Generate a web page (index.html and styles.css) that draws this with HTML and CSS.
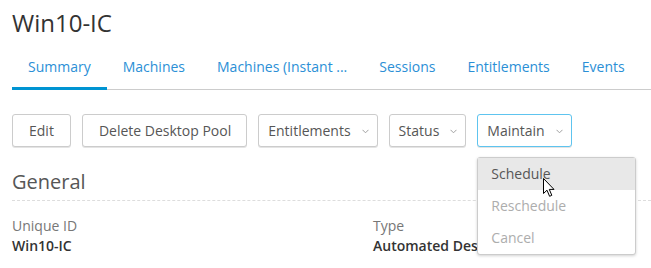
FILE: index.html
```html
<!DOCTYPE html>
<html>
<head>
<meta charset="utf-8">
<link rel="stylesheet" href="styles.css">
</head>
<body>
<div class="page">
  <h1 class="title">Win10-IC</h1>
  <nav class="tabs">
    <a class="tab active">Summary</a>
    <a class="tab">Machines</a>
    <a class="tab">Machines (Instant ...</a>
    <a class="tab">Sessions</a>
    <a class="tab">Entitlements</a>
    <a class="tab">Events</a>
  </nav>
  <div class="toolbar">
    <button class="btn">Edit</button>
    <button class="btn wide">Delete Desktop Pool</button>
    <button class="btn dd">Entitlements<svg class="chev" viewBox="0 0 7 5" width="7" height="5"><path d="M0.5 0.8 L3.5 3.8 L6.5 0.8" fill="none" stroke="#a0a0a0" stroke-width="1"/></svg></button>
    <button class="btn dd">Status<svg class="chev" viewBox="0 0 7 5" width="7" height="5"><path d="M0.5 0.8 L3.5 3.8 L6.5 0.8" fill="none" stroke="#a0a0a0" stroke-width="1"/></svg></button>
    <div class="dd-wrap">
      <button class="btn dd focus">Maintain<svg class="chev" viewBox="0 0 7 5" width="7" height="5"><path d="M0.5 0.8 L3.5 3.8 L6.5 0.8" fill="none" stroke="#a0a0a0" stroke-width="1"/></svg></button>
      <ul class="menu">
        <li class="item hover">Schedule</li>
        <li class="item disabled">Reschedule</li>
        <li class="item disabled">Cancel</li>
      </ul>
    </div>
  </div>
  <h2 class="section">General</h2>
  <div class="fields">
    <div class="field">
      <div class="label">Unique ID</div>
      <div class="value">Win10-IC</div>
    </div>
    <div class="field">
      <div class="label">Type</div>
      <div class="value">Automated Desktop Pool</div>
    </div>
  </div>
</div>
<svg class="cursor" width="13" height="20" viewBox="0 0 13 20"><path d="M0.5 0.5 L0.5 15.5 L4 12.2 L6.6 18.3 L8.8 17.3 L6.3 11.4 L11 11.4 Z" fill="#fff" stroke="#000" stroke-width="1" stroke-linejoin="miter"/></svg>
</body>
</html>
```

FILE: styles.css
```css
* { box-sizing: border-box; }
html, body { margin: 0; padding: 0; background: #fff; }
body {
  font-family: "Open Sans", "Noto Sans", sans-serif;
  color: #565656;
  width: 651px;
  height: 268px;
  overflow: hidden;
  position: relative;
}
.page { padding: 5px 0 0 12px; }
.title {
  margin: 0;
  font-size: 24px;
  line-height: 35px;
  font-weight: 400;
  color: #333;
}
.tabs {
  display: flex;
  border-bottom: 1px solid #ccc;
  margin-right: -12px;
}
.tab {
  display: block;
  padding: 17px 16px 10px;
  font-size: 14px;
  line-height: 20px;
  color: #2b8fd6;
  border-bottom: 3px solid transparent;
  margin-bottom: -1px;
  white-space: nowrap;
}
.tab.active { border-bottom-color: #0094d2; }
.toolbar {
  display: flex;
  gap: 11px;
  margin-top: 24px;
}
.btn {
  font-family: inherit;
  font-size: 14px;
  color: #565656;
  background: #fff;
  border: 1px solid #ccc;
  border-radius: 3px;
  height: 33px;
  padding: 0 16px;
  box-shadow: 0 1px 0 #e4e4e4;
  display: flex;
  align-items: center;
  white-space: nowrap;
}
.btn.wide { padding: 0 15px 0 16px; }
.btn.dd { padding: 0 8px 0 9px; }
.chev { margin-left: 11px; margin-top: 1px; }
.btn.focus { border-color: #5ec4ef; }
.dd-wrap { position: relative; }
.menu {
  position: absolute;
  top: 43px;
  left: 0;
  width: 159px;
  margin: 0;
  padding: 0;
  list-style: none;
  background: #fff;
  border: 1px solid #ccc;
  border-radius: 3px;
  box-shadow: 0 1px 3px rgba(0,0,0,0.18);
  z-index: 5;
}
.item {
  height: 32px;
  line-height: 31px;
  padding-left: 13px;
  font-size: 14px;
  color: #565656;
}
.item.hover { background: #e8e8e8; }
.item.disabled { color: #adadad; }
.section {
  margin: 21px 0 0;
  font-size: 20px;
  line-height: 28px;
  font-weight: 400;
  color: #565656;
  padding-bottom: 4px;
  border-bottom: 1px dashed #ddd;
}
.fields {
  display: grid;
  grid-template-columns: 361px 1fr;
  margin-top: 15px;
}
.label {
  font-size: 14px;
  line-height: 20px;
  color: #777;
}
.value {
  font-size: 14px;
  line-height: 20px;
  font-weight: 600;
  color: #333;
}
.cursor {
  position: absolute;
  left: 543px;
  top: 178px;
  z-index: 10;
}
```
